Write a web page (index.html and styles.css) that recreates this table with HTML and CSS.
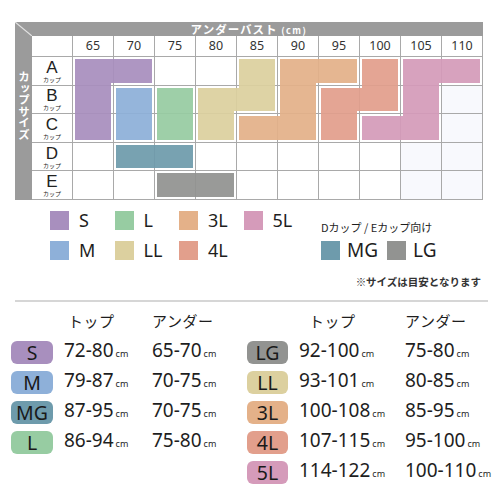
FILE: index.html
```html
<!DOCTYPE html>
<html lang="ja">

<head>
    <meta charset="UTF-8">
    <meta name="viewport" content="width=device-width, initial-scale=1.0">
    <title>サイズ表</title>
    <link rel="stylesheet" href="styles.css">
</head>

<body>
    <div class="chart">
        <div class="corner">
            <svg width="17" height="14" viewBox="0 0 17 14"><line x1="0" y1="0" x2="17" y2="14" stroke="#e2e2e2" stroke-width="1.2"/></svg>
        </div>
        <div class="title">アンダーバスト <span>(cm)</span></div>
        <div class="side">カップサイズ</div>

        <div class="cells">
            <div></div>
            <div class="num">65</div><div class="num">70</div><div class="num">75</div><div class="num">80</div><div class="num">85</div>
            <div class="num">90</div><div class="num">95</div><div class="num">100</div><div class="num">105</div><div class="num">110</div>

            <div class="cup"><span>A</span><small>カップ</small></div>
            <div></div><div></div><div></div><div></div><div></div><div></div><div></div><div></div><div></div><div></div>
            <div class="cup"><span>B</span><small>カップ</small></div>
            <div></div><div></div><div></div><div></div><div></div><div></div><div></div><div></div><div></div><div class="tint"></div>
            <div class="cup"><span>C</span><small>カップ</small></div>
            <div></div><div></div><div></div><div></div><div></div><div></div><div></div><div></div><div></div><div class="tint"></div>
            <div class="cup"><span>D</span><small>カップ</small></div>
            <div></div><div></div><div></div><div></div><div></div><div></div><div></div><div></div><div class="tint"></div><div class="tint"></div>
            <div class="cup"><span>E</span><small>カップ</small></div>
            <div></div><div></div><div></div><div></div><div></div><div></div><div></div><div></div><div class="tint"></div><div class="tint"></div>
        </div>

        <div class="blocks">
            <div class="b sz-s p-s1"></div>
            <div class="b sz-s p-s2"></div>
            <div class="b sz-m p-m"></div>
            <div class="b sz-l p-l"></div>
            <div class="b sz-ll p-ll1"></div>
            <div class="b sz-ll p-ll2"></div>
            <div class="b sz-ll p-ll3"></div>
            <div class="b sz-3l p-3l1"></div>
            <div class="b sz-3l p-3l2"></div>
            <div class="b sz-3l p-3l3"></div>
            <div class="b sz-4l p-4l1"></div>
            <div class="b sz-4l p-4l2"></div>
            <div class="b sz-4l p-4l3"></div>
            <div class="b sz-5l p-5l1"></div>
            <div class="b sz-5l p-5l2"></div>
            <div class="b sz-5l p-5l3"></div>
            <div class="b sz-mg p-mg"></div>
            <div class="b sz-lg p-lg"></div>
        </div>
    </div>

    <div class="legend">
        <div class="keys">
            <div class="key"><span class="sw sz-s"></span>S</div>
            <div class="key"><span class="sw sz-l"></span>L</div>
            <div class="key"><span class="sw sz-3l"></span>3L</div>
            <div class="key"><span class="sw sz-5l"></span>5L</div>
            <div class="key"><span class="sw sz-m"></span>M</div>
            <div class="key"><span class="sw sz-ll"></span>LL</div>
            <div class="key"><span class="sw sz-4l"></span>4L</div>
        </div>
        <div class="de-keys">
            <div class="de-title">Dカップ / Eカップ向け</div>
            <div class="de-row">
                <div class="key"><span class="sw sz-mg"></span>MG</div>
                <div class="key"><span class="sw sz-lg"></span>LG</div>
            </div>
        </div>
    </div>
    <div class="note">※サイズは目安となります</div>

    <hr class="sep">

    <div class="tables">
        <div class="tbl tbl-left">
            <div></div><div class="th th-top">トップ</div><div class="th">アンダー</div>

            <div class="badge sz-s">S</div><div class="val">72-80<small>cm</small></div><div class="val">65-70<small>cm</small></div>
            <div class="badge sz-m">M</div><div class="val">79-87<small>cm</small></div><div class="val">70-75<small>cm</small></div>
            <div class="badge sz-mg">MG</div><div class="val">87-95<small>cm</small></div><div class="val">70-75<small>cm</small></div>
            <div class="badge sz-l">L</div><div class="val">86-94<small>cm</small></div><div class="val">75-80<small>cm</small></div>
        </div>
        <div class="tbl tbl-right">
            <div></div><div class="th th-top2">トップ</div><div class="th">アンダー</div>

            <div class="badge sz-lg">LG</div><div class="val">92-100<small>cm</small></div><div class="val">75-80<small>cm</small></div>
            <div class="badge sz-ll">LL</div><div class="val">93-101<small>cm</small></div><div class="val">80-85<small>cm</small></div>
            <div class="badge sz-3l">3L</div><div class="val">100-108<small>cm</small></div><div class="val">85-95<small>cm</small></div>
            <div class="badge sz-4l">4L</div><div class="val">107-115<small>cm</small></div><div class="val">95-100<small>cm</small></div>
            <div class="badge sz-5l">5L</div><div class="val">114-122<small>cm</small></div><div class="val">100-110<small>cm</small></div>
        </div>
    </div>
</body>

</html>
```

FILE: styles.css
```css
body {
    margin: 0;
    background: #fff;
    font-family: "Noto Sans", "Noto Sans CJK JP", sans-serif;
    color: #1e1e1e;
}

/* size colours */
.sz-s { background-color: #a88fbe; }
.sz-m { background-color: #8eb0d9; }
.sz-mg { background-color: #6e9bac; }
.sz-l { background-color: #97cca2; }
.sz-lg { background-color: #929391; }
.sz-ll { background-color: #dcd09f; }
.sz-3l { background-color: #e4b189; }
.sz-4l { background-color: #e29f8c; }
.sz-5l { background-color: #d59bba; }

/* chart */
.chart {
    display: grid;
    grid-template-columns: 17px 41px repeat(10, 41px);
    grid-template-rows: 14px 21px repeat(5, 28.6px);
    width: 468px;
    margin: 22px 0 0 15px;
}

.corner {
    grid-area: 1 / 1 / 2 / 2;
    background: #9b9b9b;
}

.corner svg {
    display: block;
}

.title {
    grid-area: 1 / 2 / 2 / 13;
    background: #9b9b9b;
    color: #fff;
    font-family: "Noto Sans CJK JP", sans-serif;
    font-weight: bold;
    font-size: 11.5px;
    letter-spacing: 1px;
    line-height: 14px;
    text-align: center;
    padding-right: 17px;
}

.title span {
    font-size: 9px;
    letter-spacing: 1.5px;
}

.side {
    grid-area: 2 / 1 / 8 / 2;
    background: #9b9b9b;
    color: #fff;
    font-family: "Noto Sans CJK JP", sans-serif;
    font-weight: bold;
    font-size: 11.5px;
    line-height: 17px;
    writing-mode: vertical-rl;
    text-orientation: upright;
    padding-top: 35px;
}

.cells {
    grid-area: 2 / 2 / 8 / 13;
    display: grid;
    grid-template-columns: repeat(11, 41px);
    grid-template-rows: 21px repeat(5, 28.6px);
}

.cells > div {
    box-sizing: border-box;
    border-right: 1px solid #a9a9a9;
    border-bottom: 1px solid #a9a9a9;
    background: #fff;
}

.cells > div.tint {
    background: #f8f9fd;
}

.num {
    font-size: 12.5px;
    line-height: 20px;
    text-align: center;
    color: #333;
}

.cup {
    display: flex;
    flex-direction: column;
    align-items: center;
    justify-content: center;
    font-family: "Liberation Sans", "Noto Sans CJK JP", sans-serif;
    color: #222;
}

.cup span {
    font-size: 17px;
    line-height: 19px;
}

.cup small {
    font-size: 6px;
    line-height: 7px;
}

.blocks {
    grid-area: 3 / 3 / 8 / 13;
    display: grid;
    grid-template-columns: repeat(10, 41px);
    grid-template-rows: repeat(5, 28.6px);
    opacity: .93;
}

.b {
    margin: 2px 3px 3px 2px;
}

.p-s1 { grid-area: 1 / 1 / 2 / 3; }
.p-s2 { grid-area: 1 / 1 / 4 / 2; }
.p-m { grid-area: 2 / 2 / 4 / 3; }
.p-l { grid-area: 2 / 3 / 4 / 4; }
.p-ll1 { grid-area: 2 / 4 / 4 / 5; }
.p-ll2 { grid-area: 1 / 5 / 3 / 6; }
.p-ll3 { grid-area: 2 / 4 / 3 / 6; }
.p-3l1 { grid-area: 1 / 6 / 2 / 8; }
.p-3l2 { grid-area: 1 / 6 / 4 / 7; }
.p-3l3 { grid-area: 3 / 5 / 4 / 7; }
.p-4l1 { grid-area: 1 / 8 / 3 / 9; }
.p-4l2 { grid-area: 2 / 7 / 4 / 8; }
.p-4l3 { grid-area: 2 / 7 / 3 / 9; }
.p-5l1 { grid-area: 1 / 9 / 2 / 11; }
.p-5l2 { grid-area: 1 / 9 / 4 / 10; }
.p-5l3 { grid-area: 3 / 8 / 4 / 10; }
.p-mg { grid-area: 4 / 2 / 5 / 4; }
.p-lg { grid-area: 5 / 3 / 6 / 5; }

/* legend */
.legend {
    display: flex;
    padding: 11px 0 0 50px;
}

.keys {
    display: grid;
    grid-template-columns: repeat(4, 64.5px);
    row-gap: 11px;
}

.key {
    display: flex;
    align-items: center;
    gap: 10px;
    height: 19px;
    font-size: 18px;
    color: #1e1e1e;
}

.sw {
    width: 19px;
    height: 19px;
    flex: none;
}

.de-keys {
    margin-left: 13px;
}

.de-title {
    height: 30px;
    font-family: "Noto Sans CJK JP", sans-serif;
    font-size: 11px;
    line-height: 32px;
}

.de-row {
    display: flex;
    gap: 9px;
}

.de-row .key {
    gap: 7px;
    font-size: 19px;
}

.note {
    text-align: right;
    padding-right: 19px;
    margin-top: 15px;
    font-family: "Noto Sans CJK JP", sans-serif;
    font-size: 10.5px;
    font-weight: bold;
    line-height: 14px;
    color: #333;
}

.sep {
    border: none;
    height: 2px;
    background: #d6d6d6;
    margin: 11px 12px 0 15px;
}

/* size tables */
.tables {
    display: flex;
    padding-left: 11px;
    margin-top: 6px;
}

.tbl {
    display: grid;
    grid-auto-rows: 23px;
    grid-template-rows: 26px;
    column-gap: 11px;
    row-gap: 7px;
    align-items: center;
}

.tbl-left {
    grid-template-columns: 42px 77px auto;
    width: 236px;
}

.tbl-right {
    grid-template-columns: 41px 95px auto;
}

.th {
    font-family: "Noto Sans CJK JP", sans-serif;
    font-size: 15px;
    letter-spacing: .5px;
    line-height: 26px;
}

.th-top {
    padding-left: 4px;
}

.th-top2 {
    padding-left: 10px;
}

.badge {
    height: 23px;
    border-radius: 6px;
    text-align: center;
    font-size: 19.5px;
    line-height: 23px;
    color: #1a1a1a;
}

.val {
    font-size: 19px;
    line-height: 23px;
    white-space: nowrap;
}

.val small {
    font-size: 9px;
    margin-left: 2px;
}
```
